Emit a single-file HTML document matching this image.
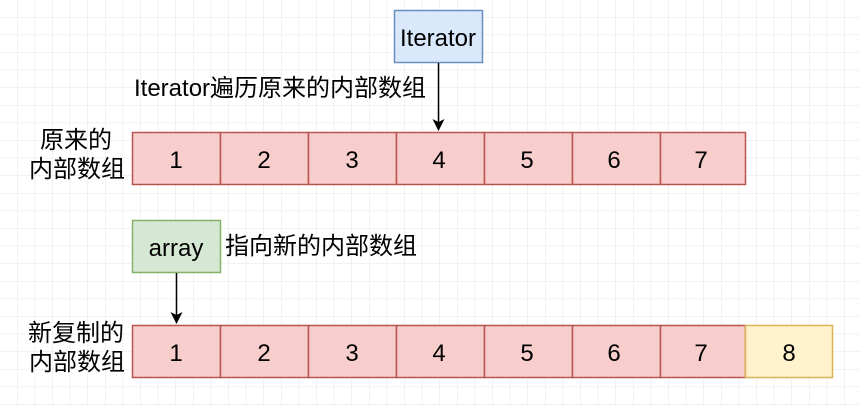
<!DOCTYPE html>
<html><head><meta charset="utf-8"><style>
html,body{margin:0;padding:0;background:#fff}
svg{display:block}
text{font-family:"Liberation Sans","Noto Sans CJK SC",sans-serif;font-size:24px;fill:#000}
</style></head><body>
<svg width="860" height="406" xmlns="http://www.w3.org/2000/svg">
<defs>
<pattern id="g" x="-0.6" y="-0.6" width="17.6" height="17.6" patternUnits="userSpaceOnUse">
<path d="M0 0H17.6M0 0V17.6" stroke="#e4e4e4" stroke-width="1" fill="none"/>
</pattern>
</defs>
<rect width="860" height="406" fill="url(#g)"/>
<g stroke="#b85450" stroke-width="1.5" fill="#f8cecc">
<rect x="132.5" y="132.5" width="88" height="52"/><rect x="220.5" y="132.5" width="88" height="52"/><rect x="308.5" y="132.5" width="88" height="52"/><rect x="396.5" y="132.5" width="88" height="52"/><rect x="484.5" y="132.5" width="88" height="52"/><rect x="572.5" y="132.5" width="88" height="52"/><rect x="660.5" y="132.5" width="85" height="52"/>
<rect x="132.5" y="325.5" width="88" height="52"/><rect x="220.5" y="325.5" width="88" height="52"/><rect x="308.5" y="325.5" width="88" height="52"/><rect x="396.5" y="325.5" width="88" height="52"/><rect x="484.5" y="325.5" width="88" height="52"/><rect x="572.5" y="325.5" width="88" height="52"/><rect x="660.5" y="325.5" width="85" height="52"/>
</g>
<rect x="745.5" y="325.5" width="87" height="52" fill="#fff2cc" stroke="#d6b656" stroke-width="1.5"/>
<rect x="394.5" y="10.5" width="88" height="52" fill="#dae8fc" stroke="#6c8ebf" stroke-width="1.5"/>
<rect x="132.5" y="220.5" width="88" height="52" fill="#d5e8d4" stroke="#82b366" stroke-width="1.5"/>
<g stroke="#000" stroke-width="1.5"><line x1="438.5" y1="63" x2="438.5" y2="122"/><line x1="176.5" y1="273" x2="176.5" y2="315"/></g>
<path d="M432.5 119 L438.5 131 L444.5 119 L438.5 122Z"/>
<path d="M170.5 312 L176.5 324 L182.5 312 L176.5 315Z"/>
<g text-anchor="middle">
<text x="176" y="168">1</text><text x="264" y="168">2</text><text x="352" y="168">3</text><text x="439" y="168">4</text><text x="527" y="168">5</text><text x="614" y="168">6</text><text x="701" y="168">7</text>
<text x="176" y="361">1</text><text x="264" y="361">2</text><text x="352" y="361">3</text><text x="439" y="361">4</text><text x="527" y="361">5</text><text x="614" y="361">6</text><text x="701" y="361">7</text><text x="789" y="361">8</text>
<text x="438" y="46">Iterator</text>
<text x="176" y="256">array</text>
<text x="76" y="148">原来的</text><text x="77" y="177">内部数组</text>
<text x="76" y="341">新复制的</text><text x="77" y="370">内部数组</text>
</g>
<text x="134" y="96">Iterator遍历原来的内部数组</text>
<text x="225" y="254">指向新的内部数组</text>
</svg>
</body></html>
